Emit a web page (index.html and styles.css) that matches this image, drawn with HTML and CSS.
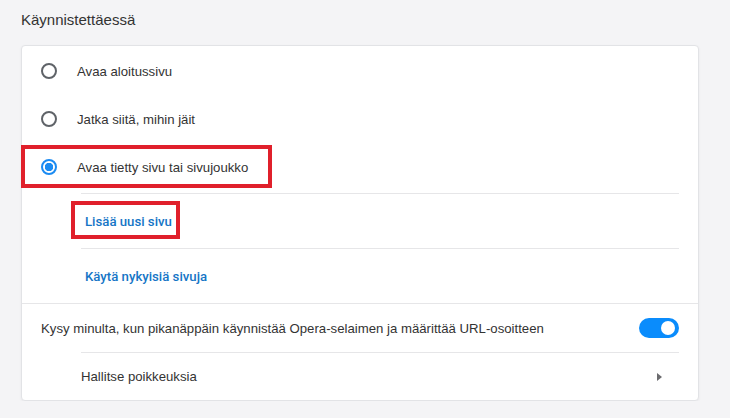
FILE: index.html
```html
<!DOCTYPE html>
<html lang="fi">
<head>
  <meta charset="UTF-8" />
  <title>Asetukset - Käynnistettäessä</title>
  <link rel="stylesheet" href="styles.css">
</head>
<body>

  <h2 class="section-title">Käynnistettäessä</h2>

  <div class="card">
    <!-- Startup options -->
    <div class="radio-row">
      <span class="radio"></span>
      <span class="label">Avaa aloitussivu</span>
    </div>
    <div class="radio-row">
      <span class="radio"></span>
      <span class="label">Jatka siitä, mihin jäit</span>
    </div>
    <div class="radio-row">
      <span class="radio checked"></span>
      <span class="label">Avaa tietty sivu tai sivujoukko</span>
    </div>

    <div class="sub-list">
      <div class="sub-row"><a href="#" class="link">Lisää uusi sivu</a></div>
      <div class="sub-row"><a href="#" class="link">Käytä nykyisiä sivuja</a></div>
    </div>

    <!-- Shortcut setting -->
    <div class="toggle-row">
      <span class="label">Kysy minulta, kun pikanäppäin käynnistää Opera-selaimen ja määrittää URL-osoitteen</span>
      <span class="toggle"><span class="knob"></span></span>
    </div>
    <div class="manage-row">
      <span class="label">Hallitse poikkeuksia</span>
      <span class="arrow"></span>
    </div>
  </div>

  <!-- annotation boxes -->
  <div class="mark mark-option"></div>
  <div class="mark mark-link"></div>

</body>
</html>
```

FILE: styles.css
```css
* {
  box-sizing: border-box;
}

body {
  margin: 0;
  background: #f4f4f6;
  font-family: 'Liberation Sans', Arial, sans-serif;
  font-size: 13.2px;
  color: #333;
}

.section-title {
  margin: 0;
  height: 45px;
  padding: 11px 21px 0;
  font-size: 15px;
  font-weight: normal;
  color: #333;
}

/* ===== CARD ===== */
.card {
  width: 678px;
  margin-left: 21px;
  padding-top: 1px;
  background: white;
  border: 1px solid #e2e3e6;
  border-radius: 4px;
  box-shadow: 0 1px 3px rgba(0,0,0,0.05);
}

.radio-row {
  height: 48px;
  display: flex;
  align-items: center;
  padding-left: 19px;
}

.radio {
  width: 16px;
  height: 16px;
  border: 2px solid #5f6368;
  border-radius: 50%;
  margin-right: 20px;
  flex-shrink: 0;
}

.radio.checked {
  border-color: #1b8bf2;
  background: radial-gradient(circle, #1b8bf2 0 4px, white 4.5px);
}

.sub-list {
  margin: 2px 19px 0 59px;
}

.sub-row {
  height: 55px;
  display: flex;
  align-items: center;
  padding-left: 4px;
  border-top: 1px solid #e6e6e8;
}

.link {
  font-family: Roboto, 'Liberation Sans', sans-serif;
  font-weight: 500;
  color: #1575c6;
  text-decoration: none;
}

.toggle-row {
  height: 49px;
  display: flex;
  align-items: center;
  justify-content: space-between;
  padding: 0 19px;
  border-top: 1px solid #e6e6e8;
}

.toggle {
  width: 40px;
  height: 20px;
  border-radius: 10px;
  background: #0a8cfc;
  position: relative;
}

.toggle .knob {
  position: absolute;
  top: 3px;
  right: 4px;
  width: 14px;
  height: 14px;
  border-radius: 50%;
  background: white;
}

.manage-row {
  height: 48px;
  display: flex;
  align-items: center;
  justify-content: space-between;
  margin: 0 19px 0 59px;
  padding-right: 17px;
  border-top: 1px solid #e6e6e8;
}

.arrow {
  width: 0;
  height: 0;
  border-top: 4px solid transparent;
  border-bottom: 4px solid transparent;
  border-left: 5px solid #6b6b6e;
}

/* ===== RED MARKS ===== */
.mark {
  position: absolute;
  border: 4px solid #e0202b;
}

.mark-option {
  left: 21px;
  top: 145px;
  width: 251px;
  height: 43px;
}

.mark-link {
  left: 71px;
  top: 201px;
  width: 109px;
  height: 38px;
}
```
